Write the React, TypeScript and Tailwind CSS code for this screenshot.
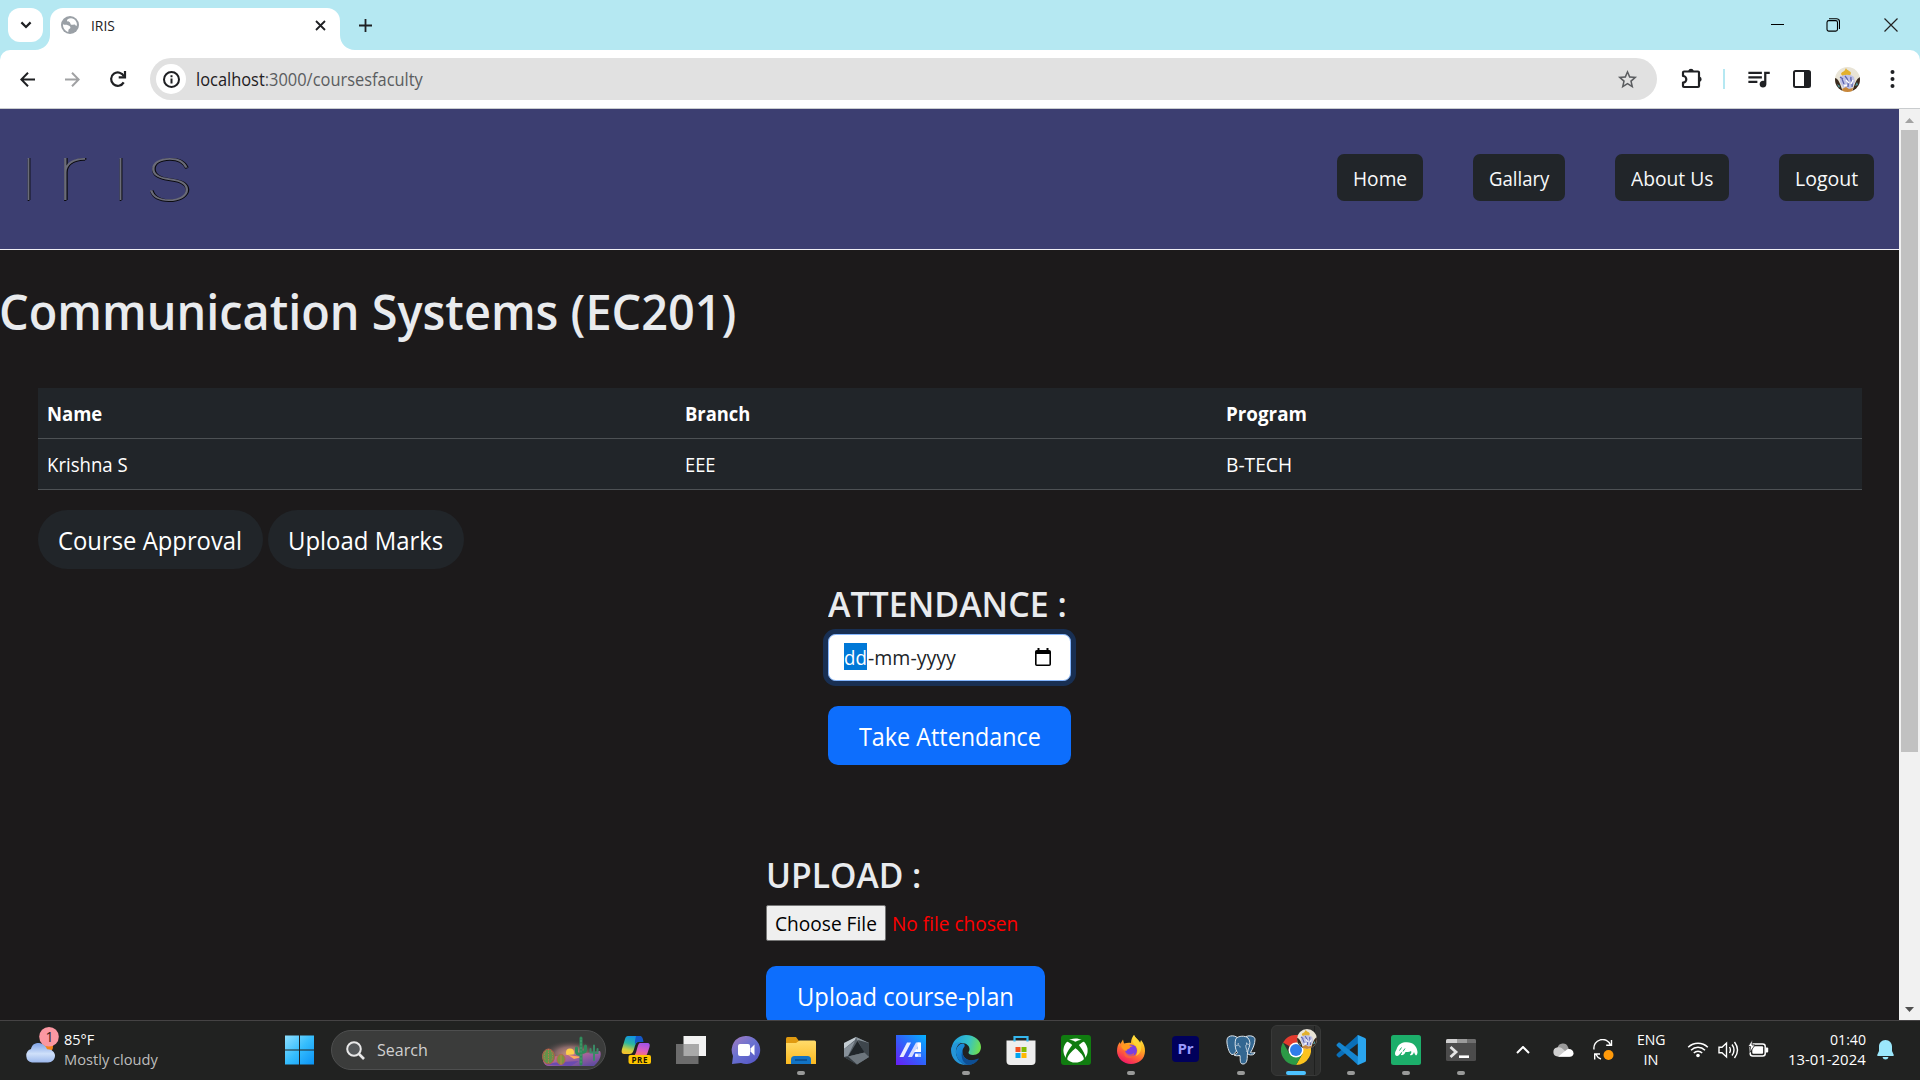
import { useLayoutEffect, useRef, useState, type ReactNode } from "react";
import { MdOutlineStarBorder, MdQueueMusic } from "react-icons/md";
import { FaXbox } from "react-icons/fa";

/** One line of text condensed or stretched to an exact width. */
function Fit({ w, children, className = "" }: { w: number; children: ReactNode; className?: string }) {
  const ref = useRef<HTMLSpanElement>(null);
  const [k, setK] = useState(1);
  useLayoutEffect(() => {
    if (ref.current) setK(w / ref.current.offsetWidth);
  }, [w]);
  return (
    <span className={`block shrink-0 ${className}`} style={{ width: w }}>
      <span ref={ref} className="inline-block origin-left whitespace-pre" style={{ transform: `scaleX(${k})` }}>
        {children}
      </span>
    </span>
  );
}

function TabStrip() {
  return (
    <div className="flex h-[50px] shrink-0 bg-[#b5e8f2]">
      <div className="mt-2 ml-2 flex h-[34px] w-[35px] items-center justify-center rounded-xl bg-white">
        <svg width="12" height="8" viewBox="0 0 12 8" fill="none" stroke="#1f2023" strokeWidth="2.2">
          <path d="M1.4 1.4 6 6l4.6-4.6" />
        </svg>
      </div>
      <svg className="mt-[35px] ml-[-8px]" width="15" height="15" viewBox="0 0 15 15">
        <path d="M15 0v15H0C8.500 15 15 8.500 15 0z" fill="#fff" />
      </svg>
      <div className="mt-[7.500px] flex w-[290px] items-center rounded-t-[13px] bg-white pb-[7.500px] pl-[11px]">
        <svg width="18" height="18" viewBox="0 0 18 18">
          <circle cx="9" cy="9" r="9" fill="#9aa0a6" />
          <path d="M10 2.200C7.500 2.200 6 3.200 6 4.600c0 1.500 2 1 2.800 1.700.9.8.2 1.900 1.400 2.400 1.300.5 2.300-.6 3.400-.2.9.3.9 1.500 2.200 1.300C16.500 6 14 2.600 10 2.200zM2 8.300c1.500.8 3.300.3 5 .9 1.600.6 2.600 1.200 2.400 2.500-.2 1.200-1.500 1-1.900 2.100-.3.800.2 1.500-.4 2.100C4 15 1.700 12 2 8.300z" fill="#fff" />
        </svg>
        <Fit w={24} className="ml-3 text-[15px] text-[#222]">IRIS</Fit>
        <svg className="mt-px ml-[199.500px]" width="11" height="11" viewBox="0 0 11 11" stroke="#1f2023" strokeWidth="1.800">
          <path d="m1 1 9 9M10 1l-9 9" />
        </svg>
      </div>
      <svg className="mt-[35px]" width="15" height="15" viewBox="0 0 15 15">
        <path d="M0 0v15h15C6.500 15 0 8.500 0 0z" fill="#fff" />
      </svg>
      <svg className="mt-[18.500px] ml-1" width="13" height="13" viewBox="0 0 13 13" stroke="#1f2023" strokeWidth="1.800">
        <path d="M6.500 0v13M0 6.500h13" />
      </svg>
      <svg className="mt-[18px] ml-auto" width="14" height="14" viewBox="0 0 14 14" stroke="#000">
        <path d="M1 6.500h13" />
      </svg>
      <svg className="mt-[18px] ml-[42px]" width="14" height="14" viewBox="0 0 14 14" fill="none" stroke="#000" strokeWidth="1.100">
        <rect x="1" y="2.600" width="10.500" height="10.500" rx="1.800" />
        <path d="M3 .7h7.500a3 3 0 0 1 3 3V11" />
      </svg>
      <svg className="mt-[18px] mr-[22px] ml-[44px]" width="14" height="14" viewBox="0 0 14 14" stroke="#222" strokeWidth="1.200">
        <path d="m.5.5 13 13M13.500.5l-13 13" />
      </svg>
    </div>
  );
}

function Deity({ size }: { size: number }) {
  return (
    <svg width={size} height={size} viewBox="0 0 25 25">
      <defs>
        <clipPath id="round">
          <circle cx="12.500" cy="12.500" r="12.500" />
        </clipPath>
      </defs>
      <g clipPath="url(#round)">
        <path d="M0 0h25v25H0z" fill="#e9e4d6" />
        <path d="M0 11c4 1 5 6 8 14H0zM25 10c-4 2-5 7-8 15h8z" fill="#3a2a1e" />
        <path d="M2 17l3 2-1 2zM22 15l1 3-3 1z" fill="#4f9aa0" />
        <path d="M6 7c1-3 3-1 5-6 1 3 4 2 5 5l-1 3-7 1z" fill="#e2b02e" />
        <path d="M5 10c3-3 11-3 14 0l1 5-4 7H9l-4-7z" fill="#bfc2e6" />
        <path d="M10 9c2 2 4 5 3 11M16 10c-1 3 2 6 1 10M7 12l2 5M5 10l3 2" stroke="#5c63ad" strokeWidth="1.300" fill="none" />
        <path d="M11 13l3 3M18 13l-2 4M9 19l3-1" stroke="#fff" strokeWidth="1.400" />
        <path d="M7 22l4-2 3 2 4-1-1 4H8z" fill="#c8873b" />
      </g>
    </svg>
  );
}

function Toolbar() {
  return (
    <div className="h-[59px] shrink-0 bg-[#b5e8f2]">
      <div className="flex h-[59px] items-center rounded-t-[10px] border-b border-[#c9ccce] bg-white">
        <svg className="ml-5" width="15" height="15" viewBox="0 0 15 15" fill="none" stroke="#1f2023" strokeWidth="2">
          <path d="M15 7.500H1.500M8 .8 1.300 7.500 8 14.200" />
        </svg>
        <svg className="ml-[30px]" width="15" height="15" viewBox="0 0 15 15" fill="none" stroke="#a0a1a3" strokeWidth="2">
          <path d="M0 7.500h13.500M7 .8l6.700 6.700L7 14.200" />
        </svg>
        <svg className="ml-[29px]" width="18" height="18" viewBox="0 0 18 18" fill="none" stroke="#1f2023" strokeWidth="2.200">
          <path d="M14.700 12.400A6.700 6.700 0 1 1 15 6.500" />
          <path d="M16 1v6.300H9.700" />
        </svg>
        <div className="ml-[23px] flex h-[42px] w-[1507px] items-center rounded-full bg-[#e1e1e1] pl-1.5">
          <div className="flex size-[30px] items-center justify-center rounded-full bg-white">
            <svg width="17" height="17" viewBox="0 0 17 17" fill="none" stroke="#1f2023" strokeWidth="2">
              <circle cx="8.500" cy="8.500" r="7.500" />
              <path d="M8.500 7.500v5M8.500 4.200v2" />
            </svg>
          </div>
          <Fit w={227} className="ml-[10px] pt-px text-[17.500px] text-[#5b5d60]">
            <span className="text-[#1f2023]">localhost</span>:3000/coursesfaculty
          </Fit>
          <MdOutlineStarBorder className="mr-[18px] ml-auto text-[#5b5d60]" size={23} />
        </div>
        <svg className="ml-[24px]" width="22" height="22" viewBox="0 0 22 22">
          <path
            d="M2 4.500Q2 3.500 3 3.500H17Q18 3.500 18 4.500V18Q18 19 17 19H3Q2 19 2 18V14.600a3.300 3.300 0 0 0 0-6.600z"
            fill="none"
            stroke="#1f2023"
            strokeWidth="2.200"
            strokeLinejoin="round"
          />
          <path d="M7.200 3a2.900 2.900 0 0 1 5.600 0zM18.500 8.400a2.900 2.900 0 0 1 0 5.600z" fill="#1f2023" />
        </svg>
        <div className="ml-5 h-5 w-0.5 bg-[#b5e8f2]" />
        <MdQueueMusic className="mt-[-2px] ml-5 text-[#1f2023]" size={27} />
        <svg className="ml-[21px]" width="18" height="18" viewBox="0 0 18 18">
          <rect x="1" y="1" width="16" height="16" rx="1.500" fill="#fff" stroke="#1f2023" strokeWidth="2" />
          <path d="M11 1h6v16h-6z" fill="#1f2023" />
        </svg>
        <div className="ml-[24px]">
          <Deity size={25} />
        </div>
        <svg className="mr-[25px] ml-auto" width="5" height="20" viewBox="0 0 5 20" fill="#1f2023">
          <circle cx="2.500" cy="3" r="2" />
          <circle cx="2.500" cy="10" r="2" />
          <circle cx="2.500" cy="17" r="2" />
        </svg>
      </div>
    </div>
  );
}

const links = [
  { label: "Home", w: 54 },
  { label: "Gallary", w: 60 },
  { label: "About Us", w: 82 },
  { label: "Logout", w: 63 },
];

function Navbar() {
  return (
    <nav className="flex h-[141px] shrink-0 items-center border-b border-[#f0eff5] bg-[#3c3e71] pr-[25px]">
      <div className="mt-[-15px] flex h-[100px] items-center pl-[20px] font-[Inter] text-[77px] leading-[100px] font-thin text-[#6a6b78] [text-shadow:1px_0_0_#0b0b0f,0_1px_0_#0b0b0f]">
        <span className="block w-[17px] text-center">ı</span>
        <Fit w={34} className="ml-[17px]">r</Fit>
        <span className="ml-[24px] block w-[17px] text-center">ı</span>
        <Fit w={52} className="ml-[14px]">s</Fit>
      </div>
      <div className="ml-auto flex gap-[50px] pb-[4px]">
        {links.map((l) => (
          <a key={l.label} className="flex h-[47px] items-center rounded-[7px] bg-[#212529] px-4 text-[19.500px] text-[#f8f9fa]">
            <Fit w={l.w} className="pt-[3px]">{l.label}</Fit>
          </a>
        ))}
      </div>
    </nav>
  );
}

function Course() {
  const rows = [
    { bold: true, cells: [["Name", 55], ["Branch", 65], ["Program", 81]] },
    { bold: false, cells: [["Krishna S", 81], ["EEE", 31], ["B-TECH", 66]] },
  ] as const;
  return (
    <main className="min-h-0 grow overflow-hidden bg-[#1c1a1b] text-white">
      <h1 className="mt-[31px] h-[60px] text-[49px] leading-[60px] font-semibold text-[#e9ebee]">
        <Fit w={737} className="ml-[-1px]">Communication Systems (EC201)</Fit>
      </h1>
      <div className="mx-[38px] mt-[47px] w-[1824px] bg-[#212529]">
        {rows.map((r) => (
          <div key={r.cells[0][0]} className="grid h-[51px] grid-cols-[638px_541px_1fr] items-center border-b border-[#4d5154]">
            {r.cells.map(([t, w]) => (
              <Fit key={t} w={w} className={r.bold ? "ml-[9px] pt-0.5 text-[19.500px] font-bold" : "ml-[9px] pt-0.5 text-[19.500px]"}>
                {t}
              </Fit>
            ))}
          </div>
        ))}
      </div>
      <div className="mt-5 ml-[38px] flex gap-[5px] text-[25px]">
        <button className="flex h-[59px] w-[225px] items-center justify-center rounded-full bg-[#212529] pt-0.5 pr-px">
          <Fit w={184}>Course Approval</Fit>
        </button>
        <button className="flex h-[59px] w-[196px] items-center justify-center rounded-full bg-[#212529] pt-0.5 pr-px">
          <Fit w={155}>Upload Marks</Fit>
        </button>
      </div>
      <section className="mt-[15px] ml-[828px] w-[243px]">
        <h2 className="h-[42px] text-[34.500px] leading-[40px] font-semibold text-[#e9ebee]">
          <Fit w={239}>ATTENDANCE :</Fit>
        </h2>
        <div className="mt-2 flex h-[47px] items-center rounded-[7.500px] border border-[#86b7fe] bg-white px-[15px] text-[19.500px] text-[#212529] ring-[5px] ring-[#0d6efd]/25">
          <span className="mb-0.5 flex h-[27px] items-center bg-[#0078d7] pt-0.5 text-white">
            <Fit w={23}>dd</Fit>
          </span>
          <Fit w={88} className="ml-px pt-px">-mm-yyyy</Fit>
          <svg className="mb-0.5 ml-auto mr-[4px]" width="16" height="18" viewBox="0 0 16 18">
            <path d="M2.500 0h2v2h7V0h2v2h.7A1.800 1.800 0 0 1 16 3.800v12.400a1.800 1.800 0 0 1-1.800 1.800H1.800A1.800 1.800 0 0 1 0 16.200V3.800A1.800 1.800 0 0 1 1.800 2h.7zM1.600 6v10.400h12.800V6z" />
          </svg>
        </div>
        <button className="mt-[25px] flex h-[59px] w-full items-center justify-center rounded-[10px] bg-[#0d6efd] pt-0.5 text-[25px]">
          <Fit w={182}>Take Attendance</Fit>
        </button>
      </section>
      <section className="mt-[90px] ml-[766px] w-[279px]">
        <h2 className="h-[42px] text-[34.500px] leading-[40px] font-semibold text-[#e9ebee]">
          <Fit w={155}>UPLOAD :</Fit>
        </h2>
        <div className="mt-2 flex h-[36px] items-center text-[19.500px]">
          <button className="flex h-[36px] w-[120px] items-center justify-center rounded-[2px] border border-[#767676] bg-[#efefef] pt-0.5 text-black">
            <Fit w={102}>Choose File</Fit>
          </button>
          <Fit w={126} className="ml-1.5 pt-0.5 text-[#ff0000]">No file chosen</Fit>
        </div>
        <button className="mt-[25px] flex h-[59px] w-full items-center justify-center rounded-[10px] bg-[#0d6efd] pt-0.5 text-[25px]">
          <Fit w={217}>Upload course-plan</Fit>
        </button>
      </section>
    </main>
  );
}

function Scrollbar() {
  return (
    <div className="flex w-[21px] shrink-0 flex-col items-center bg-[#f1f1f1]">
      <svg className="mt-[9px]" width="9" height="5" viewBox="0 0 9 5">
        <path d="M4.500 0 9 5H0z" fill="#a3a3a3" />
      </svg>
      <div className="mt-[7px] h-[622px] w-[17px] bg-[#c1c1c1]" />
      <svg className="mt-auto mb-[8px]" width="9" height="5" viewBox="0 0 9 5">
        <path d="M0 0h9L4.500 5z" fill="#505050" />
      </svg>
    </div>
  );
}

function Weather() {
  return (
    <div className="flex w-[284px] items-center pl-[25px]">
      <svg className="mt-[-10px]" width="34" height="36" viewBox="0 0 34 36">
        <defs>
          <linearGradient id="cloud" x1="0" y1="0" x2="0" y2="1">
            <stop offset="0" stopColor="#7fa3e6" />
            <stop offset=".55" stopColor="#cfe0fa" />
            <stop offset="1" stopColor="#9cb8ec" />
          </linearGradient>
        </defs>
        <circle cx="22" cy="20" r="6" fill="#f7821b" />
        <path d="M7 35.500a7 7 0 0 1-1-13.500C7 17.500 10 16 14 16c4 .3 7 3 8 6.200 4-.5 8 2.600 8 6.300 0 4-3 7-7 7z" fill="url(#cloud)" />
        <circle cx="24" cy="9.800" r="9.800" fill="#fb97a2" />
        <text x="24.500" y="15" textAnchor="middle" fontSize="14" fill="#2b1c1e">1</text>
      </svg>
      <div className="mb-px ml-[5px] text-[14.500px] leading-5 text-white">
        <Fit w={30}>85°F</Fit>
        <Fit w={94} className="text-[#bdbdbd]">Mostly cloudy</Fit>
      </div>
    </div>
  );
}

function Start() {
  return (
    <svg width="30" height="30" viewBox="0 0 30 30">
      <defs>
        <linearGradient id="win" x1="0" y1="0" x2="1" y2="1">
          <stop offset="0" stopColor="#8fe0ff" />
          <stop offset=".5" stopColor="#35bdfd" />
          <stop offset="1" stopColor="#0a93f5" />
        </linearGradient>
      </defs>
      <path d="M1 .5h14V14.500H1zM16 .5H30V14.500H16zM1 15.500h14v14H1zM16 15.500H30v14H16z" fill="url(#win)" />
    </svg>
  );
}

function Search() {
  return (
    <div className="ml-[17px] flex h-10 w-[275px] items-center overflow-hidden rounded-full border border-[#4e4f4f] bg-[#3b3c3b] pl-3.5">
      <svg width="19" height="19" viewBox="0 0 19 19" fill="none" stroke="#e8e8e8" strokeWidth="2">
        <circle cx="8" cy="8" r="6.800" fill="#55585a" />
        <path d="m13 13 5 5" strokeWidth="2.600" />
      </svg>
      <Fit w={51} className="ml-[12px] text-[17px] text-[#d0d0d0]">Search</Fit>
      <svg className="mt-0.5 mr-1 ml-auto" width="60" height="32" viewBox="0 0 60 32">
        <defs>
          <radialGradient id="sky" cx=".5" cy=".6" r=".5">
            <stop offset="0" stopColor="#d69a85" />
            <stop offset=".5" stopColor="#8a6a6a" />
            <stop offset="1" stopColor="#3b3c3b" stopOpacity="0" />
          </radialGradient>
          <linearGradient id="sand" x1="0" y1="0" x2="1" y2="1">
            <stop offset="0" stopColor="#e0875f" />
            <stop offset=".5" stopColor="#a2629e" />
            <stop offset="1" stopColor="#5146a0" />
          </linearGradient>
        </defs>
        <ellipse cx="30" cy="16" rx="30" ry="14" fill="url(#sky)" />
        <circle cx="29" cy="17.500" r="4" fill="#ffcf4a" />
        <path d="M2 26c8-5 14-5 24-6l12-1 21-3c2 4 0 10-6 15H8c-3 0-5-2-6-5z" fill="url(#sand)" />
        <path d="M4 30c12-4 24-3 34-4l-8 5z" fill="#6b4bb0" />
        <path d="M27 20l14 2-8 2z" fill="#ffab5c" />
        <path d="M40 29V3M35.500 13v4q0 2.500 4.500 2.500M44.500 11v4q0 2.500-4.500 2.500" stroke="#2f8a5a" strokeWidth="3" fill="none" strokeLinecap="round" />
        <path d="M40 28V3" stroke="#57a877" strokeWidth=".8" strokeDasharray="2 1.500" />
        <path d="M53 25V10.500M49.500 14v3.500H53M56.500 14v4H53" stroke="#3a8a66" strokeWidth="2" fill="none" strokeLinecap="round" />
        <ellipse cx="7.500" cy="21.500" rx="6" ry="7.500" fill="#62944a" stroke="#b35a48" strokeWidth="1" />
        <path d="M7.500 14v14M4.500 16q-2 5 0 10M10.500 16q2 5 0 10" stroke="#d9684f" strokeWidth=".8" fill="none" strokeDasharray="1.500 1" />
        <ellipse cx="20" cy="24.500" rx="4" ry="5" fill="#7c9440" stroke="#b36a48" strokeWidth="1" />
        <path d="M20 19.500v10" stroke="#c9854f" strokeWidth=".8" />
      </svg>
    </div>
  );
}

function Copilot() {
  return (
    <svg width="30" height="30" viewBox="0 0 30 30">
      <defs>
        <linearGradient id="cpA" x1=".6" y1="0" x2=".3" y2="1">
          <stop offset="0" stopColor="#0f8fe8" />
          <stop offset=".45" stopColor="#2bb7a0" />
          <stop offset=".8" stopColor="#d3cf3a" />
          <stop offset="1" stopColor="#f6c02c" />
        </linearGradient>
        <linearGradient id="cpB" x1=".6" y1="0" x2=".3" y2="1">
          <stop offset="0" stopColor="#a153e8" />
          <stop offset=".6" stopColor="#e060b8" />
          <stop offset="1" stopColor="#ff7a5c" />
        </linearGradient>
      </defs>
      <path d="M7 1h11c3 0 3 2 4 6h-5c-4 0-3 12-8 12H4c-3 0-4-1-3-5L4 4c.5-2 1.500-3 3-3z" fill="url(#cpA)" />
      <path d="M15 1h4c2 0 3 2 3.500 6H17c-2 0-2.500 2-3 3-.5-4 .5-6 1-9z" fill="#1557c8" />
      <path d="M19 8h7c3 0 3 2 2.500 4l-2 6c-.5 2-1.500 3-3.500 3H12c4 0 4-13 7-13z" fill="url(#cpB)" />
      <rect x="7.500" y="20" width="22.500" height="9" rx="2" fill="#ffc600" />
      <text x="18.700" y="27.500" textAnchor="middle" fontSize="8" fontWeight="700" letterSpacing=".6" fill="#1b1400">PRE</text>
    </svg>
  );
}

function TaskView() {
  return (
    <svg width="30" height="30" viewBox="0 0 30 30">
      <path d="M7.500 1H30v20H7.500z" fill="#f2f2f2" />
      <path d="M0 9h22.500v20H0z" fill="#6c6c6c" />
      <path d="M7.500 9h15v12h-15z" fill="#a9a9a9" />
    </svg>
  );
}

function Chat() {
  return (
    <svg width="30" height="30" viewBox="0 0 30 30">
      <defs>
        <linearGradient id="chat" x1="0" y1="0" x2=".8" y2="1">
          <stop offset="0" stopColor="#a77bc0" />
          <stop offset=".5" stopColor="#6a72d0" />
          <stop offset="1" stopColor="#5657c6" />
        </linearGradient>
      </defs>
      <path d="M15 1a14 14 0 1 1-5 27L1 29l1-8A14 14 0 0 1 15 1z" fill="url(#chat)" />
      <rect x="7" y="9" width="12" height="12" rx="2" fill="#fff" />
      <path d="m19.500 13.500 4-4v11l-4-4z" fill="#fff" />
    </svg>
  );
}

function Explorer() {
  return (
    <svg width="30" height="30" viewBox="0 0 30 30">
      <defs>
        <linearGradient id="fold" x1="0" y1="0" x2="0" y2="1">
          <stop offset="0" stopColor="#ffdc6b" />
          <stop offset="1" stopColor="#fbb920" />
        </linearGradient>
      </defs>
      <path d="M0 3.500Q0 2 1.500 2H10l3 4v5H0z" fill="#e09a10" />
      <path d="M0 8h10l3.500-2.500h15Q30 5.500 30 7v22H0z" fill="url(#fold)" />
      <path d="M5 29v-4.500q0-3.500 3.500-3.500h13q3.500 0 3.500 3.500V29z" fill="#1273c4" />
      <path d="M9 25h12" stroke="#0a4a8a" strokeWidth="1.500" />
    </svg>
  );
}

function Crate() {
  return (
    <svg width="30" height="30" viewBox="0 0 30 30">
      <path d="m15 2 13 6v14l-12 7.500L3 22V8z" fill="#59626a" />
      <path d="M15 2 3 8v6l11-9z" fill="#c3ccd2" />
      <path d="m15 2 13 6v2L16 5z" fill="#8b959c" />
      <path d="M28 8v14l-4-2L17 5z" fill="#3e464c" />
      <path d="M3 14v8l4-1L14 6z" fill="#87919a" />
      <path d="M16.500 6 7 21.500l16.500-4z" fill="#20262a" />
      <path d="m7 21.500 16.500-4L28 22l-12 7.500z" fill="#6d767d" />
      <path d="m3 22 4-.5 9 8z" fill="#343b40" />
    </svg>
  );
}

function MyAsus() {
  return (
    <svg width="30" height="30" viewBox="0 0 30 30">
      <defs>
        <linearGradient id="asus" x1="0" y1="1" x2="1" y2="0">
          <stop offset="0" stopColor="#6a1cf5" />
          <stop offset=".5" stopColor="#2f62fb" />
          <stop offset="1" stopColor="#04b3ff" />
        </linearGradient>
      </defs>
      <path d="M0 0h30v30H0z" fill="url(#asus)" />
      <path d="M11 7.500h4L7.500 22h-4z" fill="#e9ecff" />
      <path d="M20 7.500h4L16 22h-4z" fill="#d3dbff" />
      <path d="M21.500 7.500H25V17h-3.500zM21 13l1 4h-4z" fill="#fff" />
      <path d="M19 18.500h6V22h-6z" fill="#b9ccff" />
      <circle cx="20.500" cy="20.200" r="1.500" fill="#fff" />
    </svg>
  );
}

function Edge() {
  return (
    <svg width="30" height="30" viewBox="0 0 30 30">
      <defs>
        <linearGradient id="edgeA" x1="0" y1=".3" x2="1" y2=".5">
          <stop offset="0" stopColor="#1f9fe0" />
          <stop offset=".55" stopColor="#35c1c9" />
          <stop offset="1" stopColor="#6fe04e" />
        </linearGradient>
        <linearGradient id="edgeB" x1="0" y1="0" x2="1" y2="1">
          <stop offset="0" stopColor="#1a93e0" />
          <stop offset="1" stopColor="#0f5cae" />
        </linearGradient>
      </defs>
      <path d="M1 11C3 4 9 0 15 0c9 0 15 6 15 12 0 5-3.500 8-8 8-3 0-4.500-1-4.500-2.500 0-1 1-1.500 1-3.500 0-3-3-6-7.500-6C6 8 2 11 1 15z" fill="url(#edgeA)" />
      <path d="M0 15c0-5 5-8.500 10.500-7.500C7 9 4.500 13 5 18c.7 6 5 11 11 12C7 30.500 0 24 0 15z" fill="#2596d8" />
      <path d="M12 8.500c-4 0-7.500 4.500-7 9.500.7 7 6 12 12 12 4.500-.3 8-2.500 10-6-9 4-16-1-15.500-8 .1-2 .9-3 1.700-4 1-1.200.6-3-1.200-3.500z" fill="url(#edgeB)" />
      <path d="M11.600 15c-1.500 8 6 13 15.700 8.500.5-.2.6.3.300.8C25 28 21.500 30 17 30c-5-2-8-8-5.400-15z" fill="#0e4f94" />
    </svg>
  );
}

function Store() {
  return (
    <svg width="30" height="30" viewBox="0 0 30 30">
      <path d="M.5 5.500h29v20.500q0 4-4 4h-21q-4 0-4-4z" fill="#eeeeee" />
      <path d="M8.500 6.500V2h13v4.500" fill="none" stroke="#35b7ee" strokeWidth="2.200" />
      <path d="M9.500 12H14.500v5H9.500z" fill="#f25022" />
      <path d="M15.500 12h5v5h-5z" fill="#7fba00" />
      <path d="M9.500 18h5v5h-5z" fill="#00a4ef" />
      <path d="M15.500 18h5v5h-5z" fill="#ffb900" />
    </svg>
  );
}

function Xbox() {
  return (
    <div className="flex size-[30px] items-center justify-center rounded-[3px] bg-[#107c10]">
      <FaXbox className="text-white" size={25} />
    </div>
  );
}

function Firefox() {
  return (
    <svg width="30" height="30" viewBox="0 0 30 30">
      <defs>
        <linearGradient id="fxA" x1=".8" y1="0" x2=".3" y2="1">
          <stop offset="0" stopColor="#fff04a" />
          <stop offset=".35" stopColor="#ffb31f" />
          <stop offset=".7" stopColor="#ff5a3c" />
          <stop offset="1" stopColor="#f0156a" />
        </linearGradient>
      </defs>
      <path d="M18 0c1 3 5 5 6 8l1-3c3 4 4 7 4 11 0 8-6.500 13-14 13S1 23 1 16c0-4 1-7 3-9l.3 2L7 4.500l1 4c3-1 6-1 7-.5C15 5 16 2 18 0z" fill="url(#fxA)" />
      <circle cx="15" cy="15.500" r="6" fill="#7b3fe0" />
      <path d="M5 11c2-2 5-2.500 7-1.500 1 1 3 1 5 1.500-2 1-3 1-3.500 2.500-2 .5-3 1-3 2.500C8 16 6 13 5 11z" fill="#ff9a1f" />
      <path d="M9 16c1.500 3.500 6 4.500 9 2 1 3-2 5-5 5-4 0-6-3-4-7z" fill="#ff6a32" opacity=".6" />
      <path d="M18 0c1 3 6 5 7 10 1 5-1 9-5 11 2-4 2-8-1-11-3-2-3-7-1-10z" fill="#ffd93a" opacity=".8" />
    </svg>
  );
}

function Premiere() {
  return (
    <div className="mb-[3px] flex h-[26px] w-[27px] items-center justify-center rounded-[4px] bg-[#00005b] text-[15px] font-bold text-[#9999ff]">
      Pr
    </div>
  );
}

function Postgres() {
  return (
    <svg width="30" height="30" viewBox="0 0 30 30" fill="#336791" stroke="#dfe6ec" strokeWidth="1" strokeLinejoin="round">
      <path d="M20 1.500c4-1.500 9-.5 9 3 0 4-2 9-4.500 13 1.500.5 3 .5 4.500 0-.5 2.500-4 3-6.500 2L19 15z" />
      <path d="M4.500 1C1.500 1.500.5 4 1 8c.5 4.500 2.500 11 5 11.500 2 .5 3-2 4.500-3.500L12 3C9.500 1 7 .5 4.500 1z" />
      <path d="M10 3.500C12.500.8 19 .3 22 3c2 2.200 2.500 6 1 9.500-1 2-1.500 4.500-1.700 8 0 4-.3 8.500-4.300 8.500-3.500 0-2.500-4-3-8.500-3 .5-5 .3-6-.5 1.500-1 3-1 3.500-2.500C9 15 8.500 7 10 3.500z" />
      <path d="M10 11c1.500-1.500 4-1 4.200 1.500M22.800 9.500c-1.500-1-3.300 0-3 2 .2 2 1.500 3.500 1 5.500" fill="none" strokeWidth=".8" />
      <circle cx="12.200" cy="8.800" r=".6" fill="#fff" stroke="none" />
      <circle cx="20.700" cy="8.200" r=".6" fill="#fff" stroke="none" />
    </svg>
  );
}

function Chrome() {
  return (
    <svg width="30" height="30" viewBox="0 0 30 30">
      <path d="M15 15 2 7.500A15 15 0 0 1 28 7.500H15z" fill="#e33b2e" />
      <path d="M15 15 28 7.500A15 15 0 0 1 15 30l6.500-11.300z" fill="#fcc31e" />
      <path d="M15 15 21.500 18.700 15 30A15 15 0 0 1 2 7.500l6.500 11.200z" fill="#2c9a46" />
      <path d="M15 7.500h13l-6.500 11.200z" fill="#fcc31e" />
      <circle cx="15" cy="15" r="7.500" fill="#fff" />
      <circle cx="15" cy="15" r="6" fill="#2f7de9" />
    </svg>
  );
}

function VsCode() {
  return (
    <svg width="30" height="30" viewBox="0 0 30 30">
      <path d="M22 0 .8 19c-.5.600-.5 1.200 0 1.700l1.600 1.500c.5.400 1 .4 1.600 0L22.500 8z" fill="#0a6fb8" />
      <path d="M22 30 .8 11c-.5-.6-.5-1.200 0-1.700l1.600-1.500c.5-.4 1-.4 1.600 0L22.500 22z" fill="#1585cf" />
      <path d="m22 0 7 3q1 .5 1 1.600v20.800q0 1.100-1 1.600l-7 3c-.5-.3-.5-.7-.2-1.500V1.500C21.500.8 21.500.3 22 0z" fill="#2aa5ee" />
    </svg>
  );
}

function Bear() {
  return (
    <svg width="30" height="30" viewBox="0 0 30 30">
      <rect width="30" height="30" rx="2.500" fill="#1cae6a" />
      <path d="M4 18.500c0-2 1.500-3.500 2-5.500C7.500 9 11 7.200 15.500 7.200 22 7 26 11 26.500 17c0 1.500-.5 3-1.500 3.500-1-1-1.500-2-2-3.500-.5 2-1.500 3-3 3.200-1 .2-1.500-.5-.5-1.200 1-.8 1-2 .5-3-1.500 1-3.500 1.200-5.500 1-.5 1.500-1.500 3-3.500 3.200-1.200 0-1.500-.7-.5-1.400 1-.6.7-1.300 0-1.800-1.500 2-3 4-4.500 4-1.300 0-2-1.200-2-2.500z" fill="#fff" />
      <path d="M10.500 12.500l-2 3M14 13.500l-2 3" stroke="#1cae6a" />
    </svg>
  );
}

function Terminal() {
  return (
    <svg width="30" height="30" viewBox="0 0 30 30">
      <rect y="4" width="30" height="22" rx="1.500" fill="#4c4c4c" />
      <path d="M0 8V5.500Q0 4 1.500 4H11v4z" fill="#d0d0d0" />
      <path d="M11 4h10v4H11z" fill="#9a9a9a" />
      <path d="M21 4h7.500Q30 4 30 5.500V8h-9z" fill="#6f6f6f" />
      <path d="m4.500 12 5.500 5-5.500 5" fill="none" stroke="#e4e4e4" strokeWidth="2.800" />
      <path d="M13 21.700h10" stroke="#fff" strokeWidth="2.600" />
    </svg>
  );
}

const apps: { id: string; icon: ReactNode; state?: "open" | "active" }[] = [
  { id: "copilot", icon: <Copilot /> },
  { id: "taskview", icon: <TaskView /> },
  { id: "chat", icon: <Chat /> },
  { id: "explorer", icon: <Explorer />, state: "open" },
  { id: "crate", icon: <Crate /> },
  { id: "myasus", icon: <MyAsus /> },
  { id: "edge", icon: <Edge />, state: "open" },
  { id: "store", icon: <Store /> },
  { id: "xbox", icon: <Xbox /> },
  { id: "firefox", icon: <Firefox />, state: "open" },
  { id: "premiere", icon: <Premiere /> },
  { id: "postgres", icon: <Postgres />, state: "open" },
  { id: "chrome", icon: <Chrome />, state: "active" },
  { id: "vscode", icon: <VsCode />, state: "open" },
  { id: "bear", icon: <Bear />, state: "open" },
  { id: "terminal", icon: <Terminal />, state: "open" },
];

function Tray() {
  return (
    <div className="flex grow items-center pb-px text-white">
      <svg className="ml-[28px]" width="14" height="8" viewBox="0 0 14 8" fill="none" stroke="#fff" strokeWidth="2">
        <path d="m1 7 6-6 6 6" />
      </svg>
      <svg className="mb-px ml-[23px]" width="21" height="14" viewBox="0 0 21 14">
        <path d="M5 11 4.500 5A5.500 5.500 0 0 1 15 4l2 5z" fill="#9a9a9a" />
        <path d="M4.500 13.500A4.500 4.500 0 0 1 4 4.600C7 3.500 9 5 11 7l6 6.500z" fill="#cfcfcf" />
        <path d="M5 13.700 14 6.500c3-1.500 6.500.5 6.500 3.700 0 2-1.500 3.500-3.500 3.500z" fill="#fff" />
      </svg>
      <svg className="ml-[19px]" width="22" height="22" viewBox="0 0 22 22" fill="none" stroke="#fff" strokeWidth="1.400">
        <path d="M1 10.500A8.600 8.600 0 0 1 17.500 6M18.500 1v5.300h-5.300M8 20a8.500 8.500 0 0 1-5-4.500M7 15H1.700v5.500" />
        <circle cx="15.500" cy="16" r="5" fill="#ff9a0a" stroke="none" />
      </svg>
      <div className="ml-[21px] flex w-[30px] flex-col items-center text-[14.500px] leading-5">
        <Fit w={29}>ENG</Fit>
        <Fit w={15}>IN</Fit>
      </div>
      <svg className="mb-[2px] ml-[21px]" width="22" height="18" viewBox="0 0 22 18" fill="none" stroke="#fff" strokeWidth="1.500">
        <path d="M1.200 7.200a14 14 0 0 1 19.600 0M4 10.200a10 10 0 0 1 14 0M6.800 13a6 6 0 0 1 8.400 0" />
        <circle cx="11" cy="15.500" r="1.800" fill="#fff" stroke="none" />
      </svg>
      <svg className="ml-[9px]" width="21" height="20" viewBox="0 0 21 20" fill="none" stroke="#fff" strokeWidth="1.400">
        <path d="M1 7.200h3L8.500 3v14L4 12.800H1zM11.500 7q1.800 3 0 6M14 4.500q4 5.500 0 11M16.500 2q6 8 0 16" />
      </svg>
      <svg className="mb-[2px] ml-[9px]" width="21" height="18" viewBox="0 0 21 18">
        <rect x="2.200" y="4" width="15" height="12" rx="2.500" fill="none" stroke="#fff" strokeWidth="1.500" />
        <rect x="4.300" y="6.200" width="10.800" height="7.600" rx="1" fill="#fff" />
        <path d="M18 7.500h1.200q1 0 1 1v3q0 1-1 1H18z" fill="#fff" />
        <path d="M4.500-.5 0 6.500h2.600L1.800 12.500 7 5H4z" fill="#fff" stroke="#222" strokeWidth=".8" />
      </svg>
      <div className="ml-[19px] flex w-[78px] flex-col items-end text-[14.500px] leading-5">
        <Fit w={36}>01:40</Fit>
        <Fit w={78}>13-01-2024</Fit>
      </div>
      <svg className="ml-[11px]" width="17" height="20" viewBox="0 0 17 20" fill="#9be7fb">
        <path d="M8.500 0c4 0 6.500 3 6.500 6.500V11l1.800 4q.2 1-.8 1H1q-1 0-.8-1L2 11V6.500C2 3 4.500 0 8.500 0zM5.500 17h6q-.5 2.500-3 2.500t-3-2.500z" />
      </svg>
    </div>
  );
}

function Taskbar() {
  return (
    <footer className="flex h-[60px] shrink-0 items-stretch border-t border-[#454344] bg-[#212221]">
      <div className="flex w-[608px] items-center pb-px">
        <Weather />
        <Start />
        <Search />
      </div>
      {apps.map((a) => (
        <div
          key={a.id}
          className={
            a.state === "active"
              ? "relative mx-[2.500px] my-1 flex w-[50px] items-center justify-center rounded-md border border-[#383938] bg-[#2e2f2e] pb-px"
              : "relative flex w-[55px] items-center justify-center pb-px"
          }
        >
          {a.icon}
          {a.state === "open" && <span className="absolute bottom-[5px] left-[24px] h-1 w-2 rounded-full bg-[#999a99]" />}
          {a.state === "active" && (
            <>
              <span className="absolute inset-y-0 right-[5px] w-px bg-[#1f201f]" />
              <span className="absolute bottom-0 left-[14px] h-1 w-5 rounded-full bg-[#4cc2ff]" />
              <span className="absolute top-[3px] right-[3px]">
                <Deity size={20} />
              </span>
            </>
          )}
        </div>
      ))}
      <Tray />
    </footer>
  );
}

export default function App() {
  return (
    <div className="flex h-[1080px] w-[1920px] flex-col overflow-hidden font-['Open_Sans','Noto_Sans',sans-serif] leading-normal">
      <TabStrip />
      <Toolbar />
      <div className="flex h-[911px] shrink-0">
        <div className="flex w-[1899px] flex-col">
          <Navbar />
          <Course />
        </div>
        <Scrollbar />
      </div>
      <Taskbar />
    </div>
  );
}
